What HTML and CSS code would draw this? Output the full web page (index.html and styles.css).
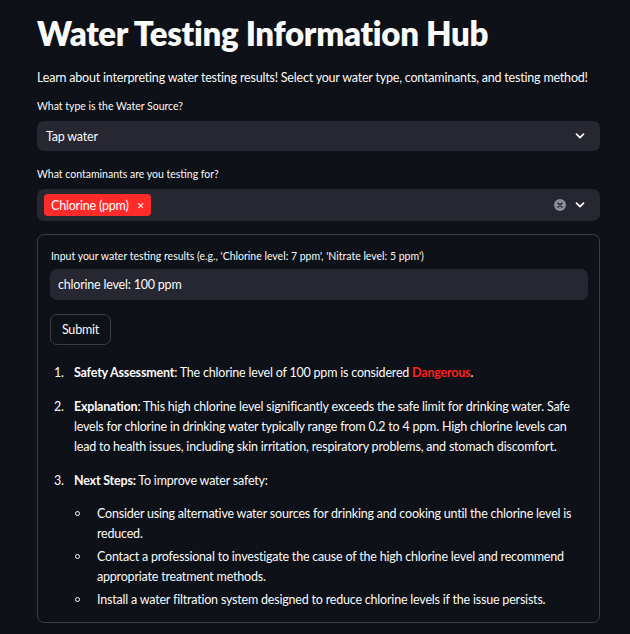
FILE: index.html
```html
<!DOCTYPE html>
<html>
<head>
<meta charset="utf-8">
<link rel="stylesheet" href="styles.css">
</head>
<body>
<main class="app">
  <h1 class="title">Water Testing Information Hub</h1>
  <p class="intro">Learn about interpreting water testing results! Select your water type, contaminants, and testing method!</p>

  <div class="field">
    <div class="label">What type is the Water Source?</div>
    <div class="select">
      <span class="select-value">Tap water</span>
      <svg class="chev" width="12" height="12" viewBox="0 0 12 12"><path d="M2.5 4.2 L6 7.6 L9.5 4.2" fill="none" stroke="#fafafa" stroke-width="1.8" stroke-linecap="round" stroke-linejoin="round"/></svg>
    </div>
  </div>

  <div class="field">
    <div class="label">What contaminants are you testing for?</div>
    <div class="select multi">
      <span class="tag">Chlorine (ppm)<span class="tag-x">✕</span></span>
      <span class="icons">
        <svg class="clear" width="12" height="12" viewBox="0 0 12 12"><circle cx="6" cy="6" r="6" fill="#8b8d99"/><path d="M4 4 L8 8 M8 4 L4 8" stroke="#262730" stroke-width="1.5" stroke-linecap="round"/></svg>
        <svg class="chev" width="12" height="12" viewBox="0 0 12 12"><path d="M2.5 4.2 L6 7.6 L9.5 4.2" fill="none" stroke="#fafafa" stroke-width="1.8" stroke-linecap="round" stroke-linejoin="round"/></svg>
      </span>
    </div>
  </div>

  <section class="box">
    <div class="label">Input your water testing results (e.g., 'Chlorine level: 7 ppm', 'Nitrate level: 5 ppm')</div>
    <div class="input">chlorine level: 100 ppm</div>
    <button class="btn">Submit</button>

    <ol class="result">
      <li><b>Safety Assessment</b>: The chlorine level of 100 ppm is considered <b class="danger">Dangerous</b>.</li>
      <li><b>Explanation</b>: This high chlorine level significantly exceeds the safe limit for drinking water. Safe levels for chlorine in drinking water typically range from 0.2 to 4 ppm. High chlorine levels can lead to health issues, including skin irritation, respiratory problems, and stomach discomfort.</li>
      <li><b>Next Steps:</b> To improve water safety:
        <ul class="sub">
          <li>Consider using alternative water sources for drinking and cooking until the chlorine level is reduced.</li>
          <li>Contact a professional to investigate the cause of the high chlorine level and recommend appropriate treatment methods.</li>
          <li>Install a water filtration system designed to reduce chlorine levels if the issue persists.</li>
        </ul>
      </li>
    </ol>
  </section>
</main>
</body>
</html>
```

FILE: styles.css
```css
html, body {
  margin: 0;
  padding: 0;
  background: #0e1117;
  color: #fafafa;
  font-family: "Lato", "Open Sans", sans-serif;
}
.app {
  width: 563px;
  margin-left: 37px;
  padding-top: 13px;
}
.title {
  margin: 0;
  font-size: 33px;
  font-weight: 800;
  line-height: 40px;
  letter-spacing: -0.3px;
}
.intro {
  margin: 16px 0 0;
  font-size: 12.5px;
  letter-spacing: -0.2px;
  line-height: 18px;
  white-space: nowrap;
}
.field {
  margin-top: 12px;
}
.label {
  font-size: 10.5px;
  line-height: 14px;
  margin-bottom: 8px;
}
.select {
  height: 30px;
  background: #262730;
  border-radius: 7px;
  display: flex;
  align-items: center;
  justify-content: space-between;
  padding: 0 14px 0 9px;
  font-size: 12.5px;
  letter-spacing: -0.2px;
}
.select.multi {
  height: 32px;
  padding-left: 7px;
}
.field + .field { margin-top: 16px; }
.tag {
  background: #ff2b2b;
  color: #fff;
  border-radius: 4px;
  height: 22px;
  display: inline-flex;
  align-items: center;
  padding: 0 7px;
  font-size: 12.5px;
}
.tag-x {
  font-size: 9px;
  margin-left: 8px;
}
.icons {
  display: flex;
  align-items: center;
  gap: 8px;
}
.chev { display: block; }
.clear { display: block; }
.box {
  margin-top: 13px;
  border: 1px solid #3b3d45;
  border-radius: 7px;
  padding: 12px 11px 9px 12px;
}
.box .label {
  margin: 2px 0 6px 1px;
}
.input {
  height: 31px;
  background: #262730;
  border-radius: 7px;
  display: flex;
  align-items: center;
  padding-left: 8px;
  font-size: 12.5px;
  letter-spacing: -0.2px;
}
.btn {
  margin-top: 14px;
  height: 31px;
  width: 61px;
  background: #0e1117;
  color: #fafafa;
  border: 1px solid #3b3d45;
  border-radius: 7px;
  font-family: inherit;
  font-size: 12.5px;
  letter-spacing: -0.2px;
  padding: 0;
}
.result {
  margin: 18px 0 0;
  padding-left: 24px;
  font-size: 12.5px;
  letter-spacing: -0.2px;
  line-height: 20px;
  list-style: none;
  counter-reset: step;
}
.result > li {
  counter-increment: step;
  margin-bottom: 14px;
}
.result > li::before {
  content: counter(step) ".";
  display: inline-block;
  width: 20px;
  margin-left: -20px;
}
.result > li:last-child { margin-bottom: 0; }
.danger { color: #ff1f1f; }
.sub {
  margin: 13px 0 0;
  padding-left: 23px;
  list-style: none;
}
.sub li { margin-bottom: 3px; }
.sub li::before {
  content: "";
  display: inline-block;
  box-sizing: border-box;
  width: 5px;
  height: 5px;
  border: 1px solid #fafafa;
  border-radius: 50%;
  margin-left: -22px;
  margin-right: 17px;
  vertical-align: 2px;
}
```
